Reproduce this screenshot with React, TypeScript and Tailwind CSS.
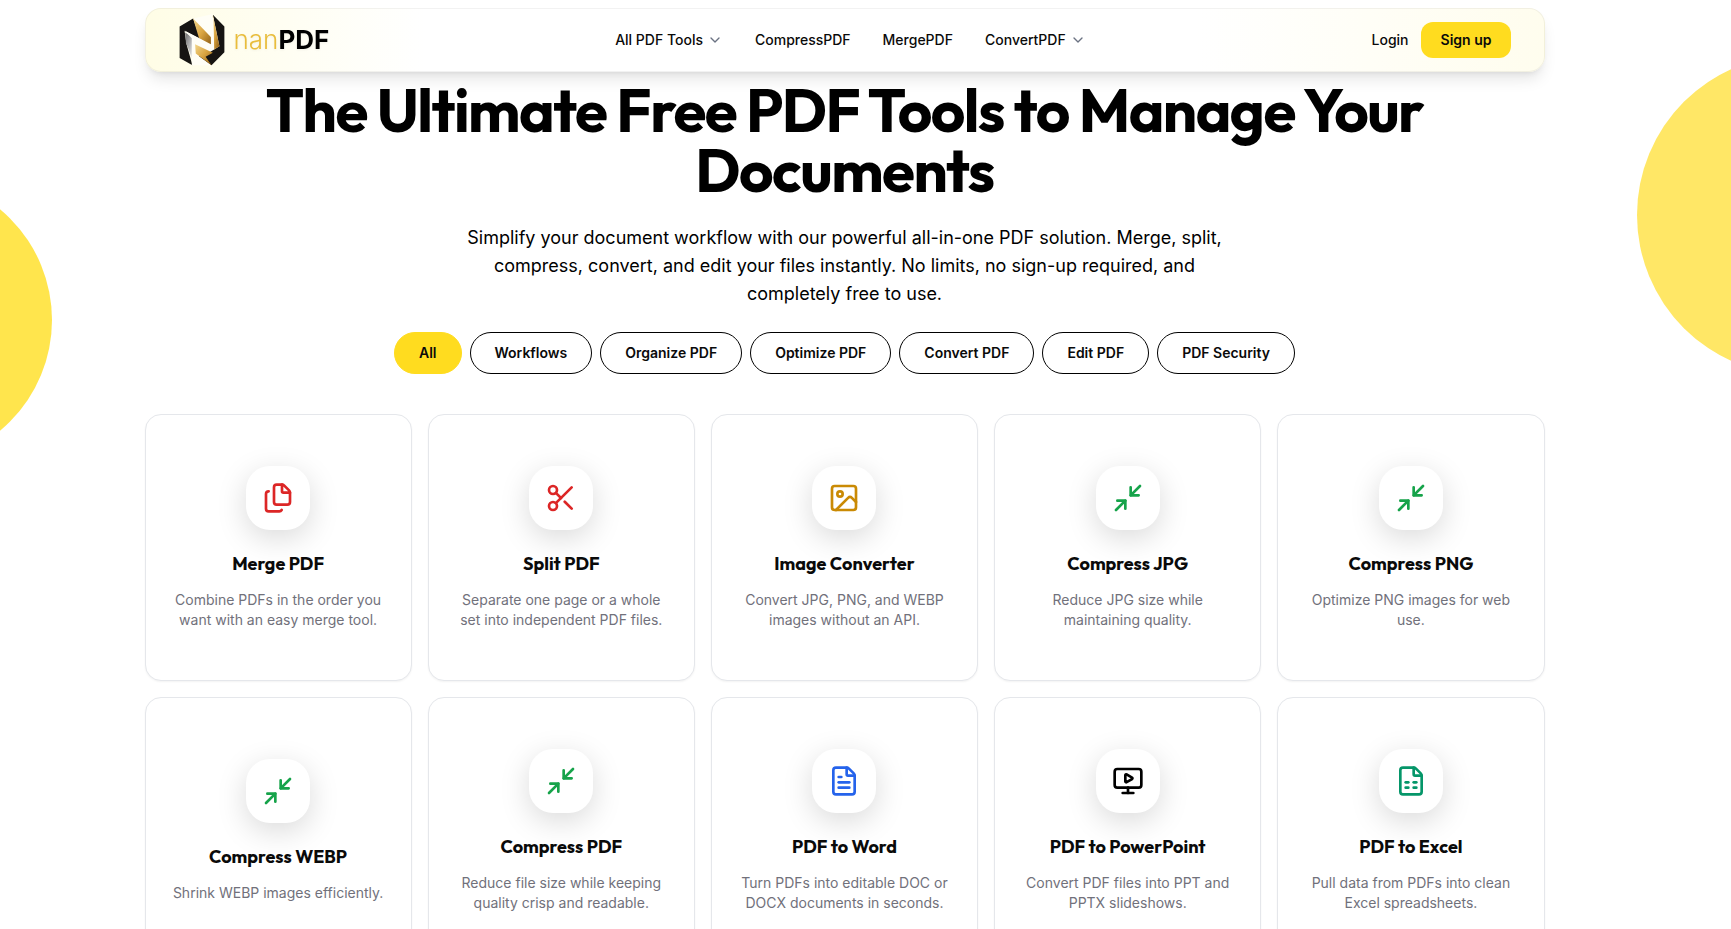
import { useState } from 'react';
import {
  ChevronDown,
  Files,
  FileSpreadsheet,
  FileText,
  Image,
  Minimize2,
  MonitorPlay,
  Scissors,
  type LucideIcon,
} from 'lucide-react';

type Tool = {
  title: string;
  text: string;
  icon: LucideIcon;
  color: string;
};

const filters = ['All', 'Workflows', 'Organize PDF', 'Optimize PDF', 'Convert PDF', 'Edit PDF', 'PDF Security'];

const tools: Tool[] = [
  { title: 'Merge PDF', text: 'Combine PDFs in the order you want with an easy merge tool.', icon: Files, color: 'text-[#dc2626]' },
  { title: 'Split PDF', text: 'Separate one page or a whole set into independent PDF files.', icon: Scissors, color: 'text-[#dc2626]' },
  { title: 'Image Converter', text: 'Convert JPG, PNG, and WEBP images without an API.', icon: Image, color: 'text-[#ca8a04]' },
  { title: 'Compress JPG', text: 'Reduce JPG size while maintaining quality.', icon: Minimize2, color: 'text-[#16a34a]' },
  { title: 'Compress PNG', text: 'Optimize PNG images for web use.', icon: Minimize2, color: 'text-[#16a34a]' },
  { title: 'Compress WEBP', text: 'Shrink WEBP images efficiently.', icon: Minimize2, color: 'text-[#16a34a]' },
  { title: 'Compress PDF', text: 'Reduce file size while keeping quality crisp and readable.', icon: Minimize2, color: 'text-[#16a34a]' },
  { title: 'PDF to Word', text: 'Turn PDFs into editable DOC or DOCX documents in seconds.', icon: FileText, color: 'text-[#2563eb]' },
  { title: 'PDF to PowerPoint', text: 'Convert PDF files into PPT and PPTX slideshows.', icon: MonitorPlay, color: 'text-black' },
  { title: 'PDF to Excel', text: 'Pull data from PDFs into clean Excel spreadsheets.', icon: FileSpreadsheet, color: 'text-[#059669]' },
];

const Logo = () => (
  <a href="#" className="flex items-center gap-2">
    <svg viewBox="0 0 138 158" className="h-13 w-12" aria-hidden="true">
      <defs>
        <linearGradient id="gold" x1="0" y1="0" x2="1" y2="1">
          <stop offset="0" stopColor="#f3d68a" />
          <stop offset="0.5" stopColor="#d9a441" />
          <stop offset="1" stopColor="#8a5a12" />
        </linearGradient>
        <linearGradient id="silver" x1="0" y1="0" x2="1" y2="1">
          <stop offset="0" stopColor="#6b6b6b" />
          <stop offset="1" stopColor="#f4f4f4" />
        </linearGradient>
      </defs>
      <path d="M42 14 100 1 104 100 100 156 40 156Z" fill="#fffef6" />
      <path d="M1 38 42 14 64 76 16 52 22 92 40 156 1 134Z" fill="#161412" />
      <path d="M102 2 137 38 137 116 98 156 60 128 92 116 122 98Z" fill="#161412" />
      <path d="M42 14 98 72 98 98 60 74Z" fill="url(#gold)" />
      <path d="M102 4 122 98 106 108 100 60Z" fill="url(#gold)" />
      <path d="M48 92 102 118 80 130 98 156 50 120Z" fill="url(#gold)" />
      <path d="M18 56 42 72 38 134 20 86Z" fill="url(#silver)" />
      <path d="M16 50 96 92 96 8 104 12 106 108 48 80 46 156 38 156 38 74Z" fill="#fffef6" />
    </svg>
    <span className="text-[26px] leading-8 drop-shadow-xs">
      <span className="font-light text-[#e9bd3c]">nan</span>
      <span className="font-bold text-black">PDF</span>
    </span>
  </a>
);

const Navbar = () => (
  <header className="flex h-16 items-center justify-between rounded-2xl border border-black/5 bg-[linear-gradient(to_right,#fffde6,#ffffff_20%,#ffffff_75%,#fffdee)] px-8 text-sm font-medium shadow-lg">
    <Logo />
    <nav className="flex items-center gap-8">
      <button className="flex items-center gap-1">
        All PDF Tools
        <ChevronDown className="size-4 text-gray-500" />
      </button>
      <a href="#">CompressPDF</a>
      <a href="#">MergePDF</a>
      <button className="flex items-center gap-1">
        ConvertPDF
        <ChevronDown className="size-4 text-gray-500" />
      </button>
    </nav>
    <div className="flex items-center gap-3">
      <a href="#">Login</a>
      <button className="h-9 rounded-xl bg-[#ffdc1f] px-5 font-semibold">Sign up</button>
    </div>
  </header>
);

const ToolCard = ({ title, text, icon: Icon, color }: Tool) => (
  <a
    href="#"
    className="flex aspect-square flex-col items-center justify-center rounded-2xl border border-gray-200 bg-white px-6 text-center shadow-xs"
  >
    <div className="flex size-16 items-center justify-center rounded-3xl bg-white shadow-[0_8px_30px_rgba(0,0,0,0.15)]">
      <Icon className={`size-8 ${color}`} />
    </div>
    <h3 className="mt-5 font-[Outfit,Lato,sans-serif] text-lg leading-7 font-bold text-[#0a0a0a]">{title}</h3>
    <p className="mt-3 text-sm text-zinc-500">{text}</p>
  </a>
);

export default function App() {
  const [active, setActive] = useState('All');

  return (
    <div className="relative min-h-screen overflow-hidden bg-white pr-[42px] font-[Inter,sans-serif] text-[#0a0a0a]">
      <div className="absolute top-[176px] -left-[236px] size-72 rounded-full bg-[#ffe54d]" />
      <div className="absolute top-[55px] -right-[226px] size-80 rounded-full bg-[#ffe766]" />

      <div className="relative mx-auto max-w-[1400px] pt-2">
        <Navbar />
        <main className="pt-2">
          <h1 className="mx-auto max-w-7xl text-center font-[Outfit,Lato,sans-serif] text-6xl leading-[60px] font-bold tracking-tight text-black">
            The Ultimate Free PDF Tools to Manage Your Documents
          </h1>
          <p className="mx-auto mt-6 max-w-3xl text-center text-lg leading-7 text-black">
            Simplify your document workflow with our powerful all-in-one PDF solution. Merge, split, compress, convert,
            and edit your files instantly. No limits, no sign-up required, and completely free to use.
          </p>
          <div className="mt-6 flex flex-wrap justify-center gap-2">
            {filters.map((name) => (
              <button
                key={name}
                onClick={() => setActive(name)}
                className={`rounded-full border px-6 py-2.5 text-sm font-semibold ${
                  active === name ? 'border-[#ffdc1f] bg-[#ffdc1f]' : 'border-black bg-white'
                }`}
              >
                {name}
              </button>
            ))}
          </div>
          <div className="mt-10 grid grid-cols-5 gap-4">
            {tools.map((tool) => (
              <ToolCard key={tool.title} {...tool} />
            ))}
          </div>
        </main>
      </div>
    </div>
  );
}
